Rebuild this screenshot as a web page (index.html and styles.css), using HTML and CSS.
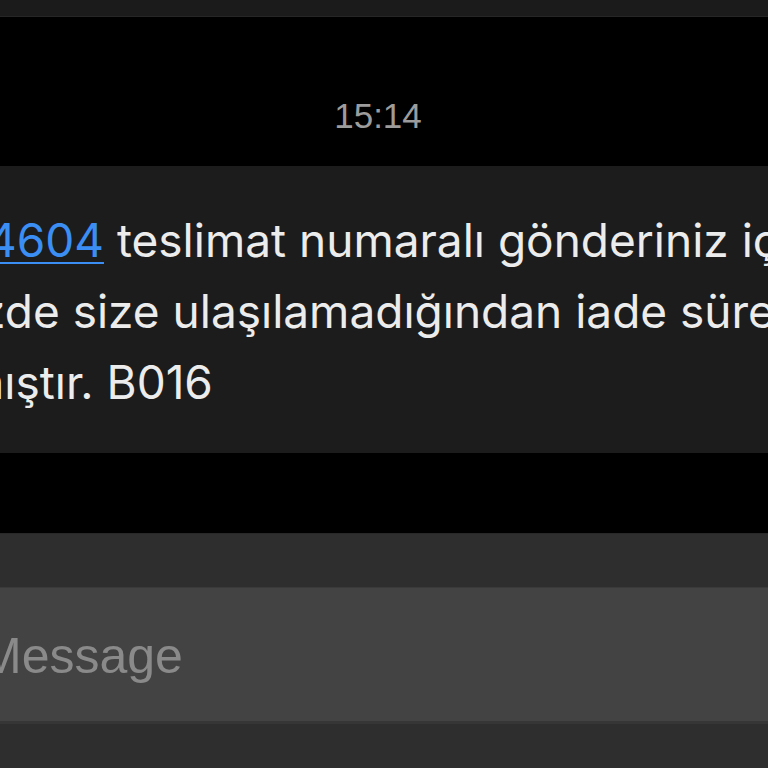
FILE: index.html
```html
<!DOCTYPE html>
<html lang="tr">
<head>
<meta charset="utf-8">
<title>Messages</title>
<link rel="stylesheet" href="styles.css">
</head>
<body>
<div class="screen">
  <div class="topbar"></div>
  <div class="time">15:14</div>
  <div class="bubble">
    <div class="line l1"><span class="link">4604</span> teslimat numaralı gönderiniz için</div>
    <div class="line l2">zde size ulaşılamadığından iade süreci</div>
    <div class="line l3">mıştır. B016</div>
  </div>
  <div class="composer">
    <div class="input"><span class="placeholder">Message</span></div>
  </div>
</div>
</body>
</html>
```

FILE: styles.css
```css
html, body {
  margin: 0;
  padding: 0;
  background: #000;
}
.screen {
  width: 768px;
  height: 768px;
  overflow: hidden;
  background: #000;
  font-family: "Liberation Sans", Arial, sans-serif;
  display: flex;
  flex-direction: column;
}
.topbar {
  height: 16px;
  background: #1b1b1b;
  border-bottom: 1px solid #262626;
  flex: none;
}
.time {
  margin-top: 79px;
  height: 40px;
  line-height: 40px;
  font-size: 35px;
  color: #9c9c9c;
  text-align: center;
  padding-right: 12px;
  flex: none;
}
.bubble {
  margin-top: 30px;
  height: 287px;
  box-sizing: border-box;
  padding-top: 39px;
  background: #1c1c1c;
  overflow: hidden;
  flex: none;
}
.line {
  white-space: nowrap;
  font-family: Inter, "Liberation Sans", sans-serif;
  font-size: 46px;
  line-height: 71px;
  color: #ececec;
}
.l1 { margin-left: -13px; }
.l2 { margin-left: -20px; }
.l3 { margin-left: -36px; }
.link {
  color: #3b8ef3;
  text-decoration: underline;
  text-decoration-thickness: 2px;
  text-underline-offset: 5px;
}
.composer {
  margin-top: 80px;
  flex: 1;
  background: #2e2e2e;
  border-top: 1px solid #282828;
  padding-top: 53px;
}
.input {
  height: 133px;
  background: #434343;
  border-top: 1px solid #3a3a3a;
  border-bottom: 3px solid #363636;
  line-height: 136px;
  white-space: nowrap;
  overflow: hidden;
}
.placeholder {
  display: inline-block;
  margin-left: -20px;
  font-size: 50px;
  color: #8a8a8a;
}
```
